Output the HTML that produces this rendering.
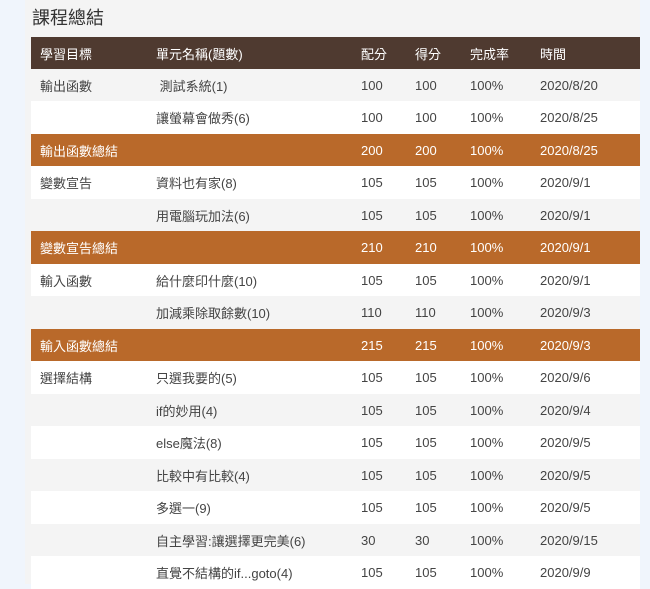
<!DOCTYPE html>
<html><head><meta charset="utf-8"><style>
html,body{margin:0;padding:0;}
body{width:650px;height:584px;overflow:hidden;background:#f0f5fc;font-family:"Liberation Sans","Noto Sans CJK TC",sans-serif;position:relative;}
.page{position:absolute;left:25px;top:0;width:615px;height:584px;background:#f4f4f4;}
h1{position:absolute;left:32px;top:6px;margin:0;font-weight:normal;font-size:18px;color:#333;line-height:24px;}
table{position:absolute;left:31px;top:37px;width:609px;border-collapse:collapse;font-size:13px;}
tr{height:33px;}
tr:nth-child(even){height:32px;}
td,th{padding:0;text-align:left;font-weight:normal;white-space:nowrap;}
th{background:#4f3a30;color:#fff;}
tr.h{height:32px;}
tr.g td{background:#f4f4f4;color:#444;}
tr.w td{background:#fff;color:#444;}
tr.s td{background:#b9692a;color:#fff;}
.c1{padding-left:9px;width:116px;}
.c2{width:205px;}
.c3{width:54px;}
.c4{width:55px;}
.c5{width:70px;}
</style></head><body>
<div class="page"></div>
<h1>課程總結</h1>
<table>
<tr class="h"><th class="c1">學習目標</th><th class="c2">單元名稱(題數)</th><th class="c3">配分</th><th class="c4">得分</th><th class="c5">完成率</th><th>時間</th></tr>
<tr class="g"><td class="c1">輸出函數</td><td>&nbsp;測試系統(1)</td><td>100</td><td>100</td><td>100%</td><td>2020/8/20</td></tr>
<tr class="w"><td class="c1"></td><td>讓螢幕會做秀(6)</td><td>100</td><td>100</td><td>100%</td><td>2020/8/25</td></tr>
<tr class="s"><td class="c1">輸出函數總結</td><td></td><td>200</td><td>200</td><td>100%</td><td>2020/8/25</td></tr>
<tr class="w"><td class="c1">變數宣告</td><td>資料也有家(8)</td><td>105</td><td>105</td><td>100%</td><td>2020/9/1</td></tr>
<tr class="g"><td class="c1"></td><td>用電腦玩加法(6)</td><td>105</td><td>105</td><td>100%</td><td>2020/9/1</td></tr>
<tr class="s"><td class="c1">變數宣告總結</td><td></td><td>210</td><td>210</td><td>100%</td><td>2020/9/1</td></tr>
<tr class="w"><td class="c1">輸入函數</td><td>給什麼印什麼(10)</td><td>105</td><td>105</td><td>100%</td><td>2020/9/1</td></tr>
<tr class="g"><td class="c1"></td><td>加減乘除取餘數(10)</td><td>110</td><td>110</td><td>100%</td><td>2020/9/3</td></tr>
<tr class="s"><td class="c1">輸入函數總結</td><td></td><td>215</td><td>215</td><td>100%</td><td>2020/9/3</td></tr>
<tr class="w"><td class="c1">選擇結構</td><td>只選我要的(5)</td><td>105</td><td>105</td><td>100%</td><td>2020/9/6</td></tr>
<tr class="g"><td class="c1"></td><td>if的妙用(4)</td><td>105</td><td>105</td><td>100%</td><td>2020/9/4</td></tr>
<tr class="w"><td class="c1"></td><td>else魔法(8)</td><td>105</td><td>105</td><td>100%</td><td>2020/9/5</td></tr>
<tr class="g"><td class="c1"></td><td>比較中有比較(4)</td><td>105</td><td>105</td><td>100%</td><td>2020/9/5</td></tr>
<tr class="w"><td class="c1"></td><td>多選一(9)</td><td>105</td><td>105</td><td>100%</td><td>2020/9/5</td></tr>
<tr class="g"><td class="c1"></td><td>自主學習:讓選擇更完美(6)</td><td>30</td><td>30</td><td>100%</td><td>2020/9/15</td></tr>
<tr class="w"><td class="c1"></td><td>直覺不結構的if...goto(4)</td><td>105</td><td>105</td><td>100%</td><td>2020/9/9</td></tr>
</table>
</body></html>
